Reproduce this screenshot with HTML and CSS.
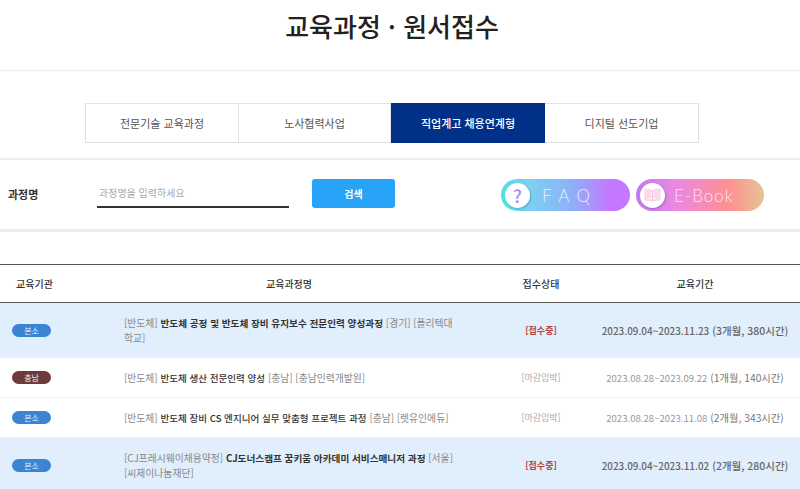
FILE: index.html
```html
<!DOCTYPE html>
<html lang="ko">
<head>
    <meta charset="UTF-8">
    <meta name="viewport" content="width=device-width, initial-scale=1.0">
    <title>교육과정 · 원서접수</title>
    <link rel="stylesheet" href="styles.css">
</head>
<body>
    <div class="page">
        <h1 class="page-title">교육과정 · 원서접수</h1>

        <ul class="tabs">
            <li class="tab">전문기술 교육과정</li>
            <li class="tab">노사협력사업</li>
            <li class="tab tab-on">직업계고 채용연계형</li>
            <li class="tab">디지털 선도기업</li>
        </ul>

        <div class="search-box">
            <span class="search-label">과정명</span>
            <input class="search-input" type="text" placeholder="과정명을 입력하세요">
            <button class="search-btn">검색</button>
            <div class="quick-links">
                <a class="pill pill-faq">
                    <span class="pill-icon pill-icon-q">?</span>
                    <span class="pill-text pill-text-faq">F A Q</span>
                </a>
                <a class="pill pill-book">
                    <span class="pill-icon">
                        <svg width="17" height="14" viewBox="0 0 18 15">
                            <path d="M9 3C7 1.6 4 1.2 1 1.6V13c3-.4 6 0 8 1.2 2-1.2 5-1.6 8-1.2V1.6C14 1.2 11 1.6 9 3z" fill="#fde6f2" stroke="#f5c4e0" stroke-width="1"/>
                            <path d="M9 3v11M3 4.2h4M3 6.6h4M3 9h4M11 4.2h4M11 6.6h4M11 9h4" fill="none" stroke="#f5c4e0" stroke-width="1"/>
                        </svg>
                    </span>
                    <span class="pill-text">E-Book</span>
                </a>
            </div>
        </div>

        <table class="course-table">
            <colgroup>
                <col class="col-org">
                <col class="col-name">
                <col class="col-status">
                <col class="col-date">
            </colgroup>
            <thead>
                <tr>
                    <th>교육기관</th>
                    <th>교육과정명</th>
                    <th>접수상태</th>
                    <th>교육기간</th>
                </tr>
            </thead>
            <tbody>
                <tr class="row-open">
                    <td><span class="badge">본소</span></td>
                    <td class="name"><span class="tag">[반도체]</span> <b>반도체 공정 및 반도체 장비 유지보수 전문인력 양성과정</b> <span class="tag">[경기] [폴리텍대학교]</span></td>
                    <td class="status">[접수중]</td>
                    <td class="date"><span class="day">2023.09.04~2023.11.23</span> (3개월, 380시간)</td>
                </tr>
                <tr>
                    <td><span class="badge badge-cn">충남</span></td>
                    <td class="name"><span class="tag">[반도체]</span> <b>반도체 생산 전문인력 양성</b> <span class="tag">[충남] [충남인력개발원]</span></td>
                    <td class="status">[마감임박]</td>
                    <td class="date"><span class="day">2023.08.28~2023.09.22</span> (1개월, 140시간)</td>
                </tr>
                <tr>
                    <td><span class="badge">본소</span></td>
                    <td class="name"><span class="tag">[반도체]</span> <b>반도체 장비 CS 엔지니어 실무 맞춤형 프로젝트 과정</b> <span class="tag">[충남] [렛유인에듀]</span></td>
                    <td class="status">[마감임박]</td>
                    <td class="date"><span class="day">2023.08.28~2023.11.08</span> (2개월, 343시간)</td>
                </tr>
                <tr class="row-open">
                    <td><span class="badge">본소</span></td>
                    <td class="name"><span class="tag">[CJ프레시웨이채용약정]</span> <b>CJ도너스캠프 꿈키움 아카데미 서비스매니저 과정</b> <span class="tag">[서울] [씨제이나눔재단]</span></td>
                    <td class="status">[접수중]</td>
                    <td class="date"><span class="day">2023.09.04~2023.11.02</span> (2개월, 280시간)</td>
                </tr>
            </tbody>
        </table>
    </div>
</body>
</html>
```

FILE: styles.css
```css
* {
    box-sizing: border-box;
}

body {
    margin: 0;
    background: #fff;
    color: #333;
    font-family: 'Noto Sans CJK KR', 'Noto Sans', sans-serif;
}

.page {
    height: 100vh;
    overflow: hidden;
}

.page-title {
    margin: 0;
    height: 71px;
    padding: 8px 16px 0 0;
    border-bottom: 1px solid #eee;
    font-size: 26px;
    line-height: 36px;
    font-weight: 500;
    color: #222;
    text-align: center;
}

.tabs {
    display: grid;
    grid-template-columns: 153px 152px 154px 153px;
    width: 614px;
    height: 40px;
    margin: 32px 0 0 85px;
    padding: 0;
    list-style: none;
    border: 1px solid #e2e2e2;
}

.tab {
    border-right: 1px solid #e2e2e2;
    font-size: 11px;
    line-height: 38px;
    color: #555;
    text-align: center;
}

.tab:last-child {
    border-right: 0;
}

.tab-on {
    margin: -1px 0;
    height: 40px;
    line-height: 40px;
    background: #003087;
    border-right: 0;
    color: #fff;
    font-weight: 500;
}

.search-box {
    display: flex;
    align-items: flex-start;
    height: 74px;
    margin-top: 15px;
    padding: 19px 0 0 8px;
    border-top: 2px solid #eee;
    border-bottom: 3px solid #eee;
}

.search-label {
    width: 89px;
    font-size: 11px;
    line-height: 30px;
    font-weight: 700;
    color: #333;
}

.search-input {
    width: 192px;
    height: 29px;
    padding: 0 2px;
    border: 0;
    border-bottom: 2px solid #333;
    outline: 0;
    font-family: inherit;
    font-size: 10px;
}

.search-input::placeholder {
    color: #aaa;
}

.search-btn {
    width: 83px;
    height: 29px;
    margin-left: 23px;
    border: 0;
    border-radius: 3px;
    background: #27a4f7;
    color: #fff;
    font-family: inherit;
    font-size: 10px;
    font-weight: 700;
}

.quick-links {
    display: flex;
    gap: 6px;
    margin-left: 106px;
}

.pill {
    display: flex;
    align-items: center;
    width: 129px;
    height: 32px;
    padding-left: 4px;
    border-radius: 16px;
}

.pill-faq {
    background: linear-gradient(90deg, #4fe0e0 0%, #7cd0f2 22%, #8fb0f8 55%, #c577ff 85%);
}

.pill-book {
    width: 128px;
    background: linear-gradient(90deg, #c377f2 0%, #ea88e4 30%, #ff9090 72%, #e6c394 100%);
}

.pill-icon {
    display: flex;
    align-items: center;
    justify-content: center;
    width: 25px;
    height: 25px;
    border-radius: 50%;
    background: #fff;
    box-shadow: 1px 1px 2px rgba(0,0,0,0.2);
}

.pill-icon-q {
    color: #a78bf5;
    font-size: 18px;
    font-weight: 500;
}

.pill-text {
    margin-left: 9px;
    color: #fbe0f6;
    font-family: 'Lato', sans-serif;
    font-size: 17px;
    font-weight: 300;
    letter-spacing: 1px;
}

.pill-text-faq {
    margin-left: 12px;
    color: #e4f0ff;
    letter-spacing: 1.5px;
}

.course-table {
    width: 800px;
    margin-top: 32px;
    border-collapse: collapse;
    table-layout: fixed;
    border-top: 1px solid #555;
}

.col-org { width: 69px; }
.col-name { width: 440px; }
.col-status { width: 64px; }
.col-date { width: 227px; }

.course-table th {
    height: 38px;
    padding: 0;
    border-bottom: 1px solid #555;
    font-size: 10px;
    font-weight: 500;
    color: #333;
}

.course-table th:last-child {
    padding-left: 17px;
}

.course-table td {
    padding: 12px 0;
    border-bottom: 1px solid #f2f2f2;
    font-size: 10px;
    line-height: 15px;
    text-align: center;
    color: #999;
}

.row-open td {
    background: #e1eefc;
}

.badge {
    display: block;
    width: 39px;
    height: 13px;
    margin-left: 12px;
    border-radius: 7px;
    background: #3a84d4;
    color: #e8f2fc;
    font-size: 8px;
    line-height: 13px;
}

.badge-cn {
    background: #6e3a3a;
}

.course-table .name {
    padding-left: 55px;
    padding-right: 53px;
    text-align: left;
}

.name b {
    color: #333;
    font-size: 9.55px;
    font-weight: 500;
    line-height: 1;
}

.row-open .name b {
    font-size: 9.65px;
    font-weight: 700;
}

.tag {
    color: #888;
    font-size: 9.8px;
    line-height: 1;
}

.course-table .status {
    font-size: 9px;
    color: #aaa;
}

.row-open .status {
    color: #b8433f;
    font-weight: 700;
}

.course-table .date {
    padding-left: 17px;
    color: #777;
    font-size: 10.3px;
}

.day {
    color: #999;
    font-size: 9.6px;
    line-height: 1;
}

.row-open .date,
.row-open .day {
    color: #666;
    font-weight: 500;
}

.course-table .row-open .date {
    font-size: 10.5px;
}

.row-open .day {
    font-size: 9.9px;
}
```
